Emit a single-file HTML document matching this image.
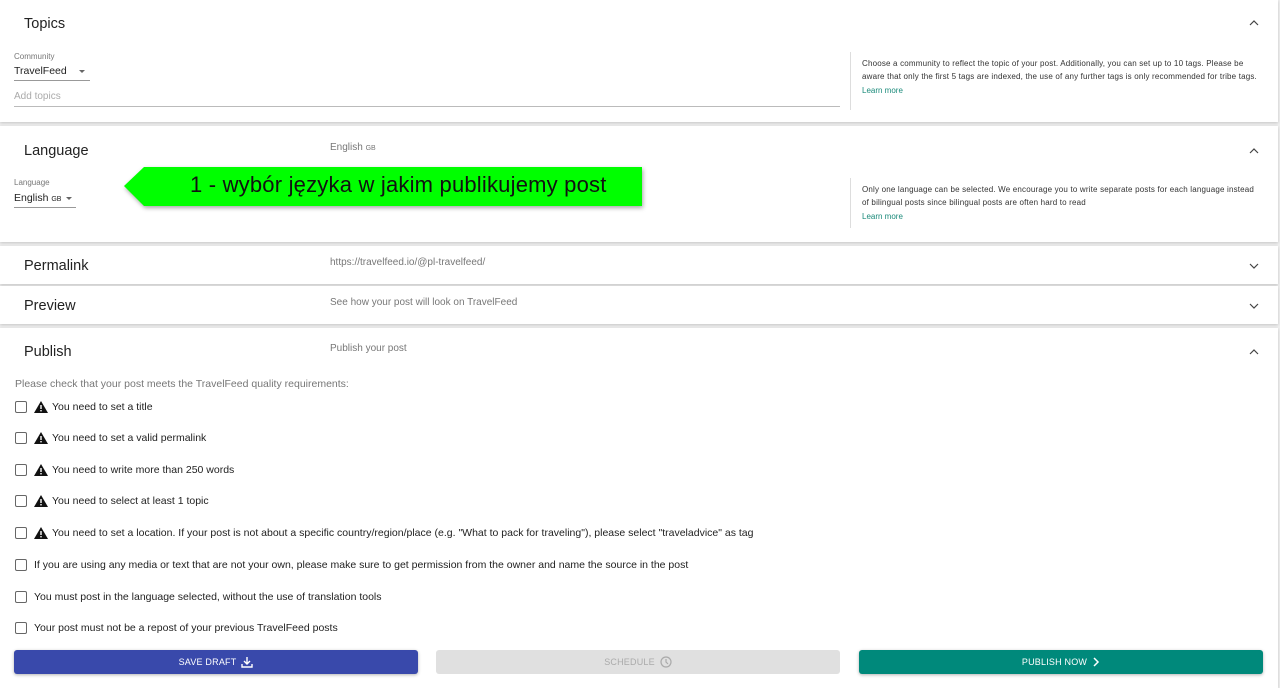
<!DOCTYPE html>
<html><head><meta charset="utf-8">
<style>
*{box-sizing:border-box;margin:0;padding:0}
body{width:1280px;height:679px;overflow:hidden;background:#efefef;font-family:"Liberation Sans",Arial,sans-serif;color:#222;position:relative}
.card{position:absolute;left:0;width:1278px;background:#fff;box-shadow:0 1px 3px rgba(0,0,0,.18)}
.h{position:absolute;left:24px;font-size:14.5px;color:#222}
.sub{position:absolute;left:330px;font-size:10px;color:#777}
.chev{position:absolute;left:1248px;width:12px;height:8px}
.lbl{position:absolute;left:14px;font-size:8px;color:#777}
.help{position:absolute;left:850px;border-left:1px solid #ddd;padding-left:11px;font-size:8px;line-height:13.3px;color:#333;width:410px;letter-spacing:.18px}
.help a{color:#1a8a7a;text-decoration:none;display:block;letter-spacing:0}
.row{position:absolute;left:15px;font-size:10.5px;color:#222;display:flex;align-items:center}
.cb{width:12px;height:12px;border:1.5px solid #666;border-radius:2px;margin-right:7px}
.warn{margin-right:4px}
.btn{position:absolute;top:650px;height:24px;border-radius:3px;font-size:9px;display:flex;align-items:center;justify-content:center;gap:5px;letter-spacing:.2px}
</style></head><body>
<div class="card" style="top:0;height:122px">
  <div class="h" style="top:16px">Topics</div>
  <svg class="chev" style="top:19px" viewBox="0 0 12 8"><path d="M2 6L6 2L10 6" stroke="#444" stroke-width="1.2" fill="none"/></svg>
  <div class="lbl" style="top:52px">Community</div>
  <div style="position:absolute;left:14px;top:65px;font-size:10.5px">TravelFeed</div>
  <div style="position:absolute;left:79px;top:70px;border:3px solid transparent;border-top:3.5px solid #666"></div>
  <div style="position:absolute;left:14px;top:80px;width:76px;height:1px;background:#999"></div>
  <div style="position:absolute;left:14px;top:91px;font-size:10px;color:#aaa">Add topics</div>
  <div style="position:absolute;left:14px;top:106px;width:826px;height:1px;background:#bbb"></div>
</div>
<div class="help" style="top:52px;height:58px;padding-top:5px">Choose a community to reflect the topic of your post. Additionally, you can set up to 10 tags. Please be aware that only the first 5 tags are indexed, the use of any further tags is only recommended for tribe tags.<a>Learn more</a></div>

<div class="card" style="top:126px;height:116px">
  <div class="h" style="top:17px">Language</div>
  <div class="sub" style="top:16px">English <span style="font-size:7px">GB</span></div>
  <svg class="chev" style="top:21px" viewBox="0 0 12 8"><path d="M2 6L6 2L10 6" stroke="#444" stroke-width="1.2" fill="none"/></svg>
  <div class="lbl" style="top:52px">Language</div>
  <div style="position:absolute;left:14px;top:66px;font-size:10.5px">English <span style="font-size:7px">GB</span></div>
  <div style="position:absolute;left:66px;top:71px;border:3px solid transparent;border-top:3.5px solid #666"></div>
  <div style="position:absolute;left:14px;top:81px;width:62px;height:1px;background:#999"></div>
  <div class="help" style="top:52px;height:50px;padding-top:5px">Only one language can be selected. We encourage you to write separate posts for each language instead of bilingual posts since bilingual posts are often hard to read<a>Learn more</a></div>
  <svg style="position:absolute;left:122px;top:40px;filter:drop-shadow(1px 2px 2px rgba(0,0,0,.35))" width="522" height="44" viewBox="0 0 522 44"><polygon points="2,20 22,1 520,1 520,40 22,40" fill="#00ff00"/></svg>
  <div style="position:absolute;left:190px;top:46px;font-size:22px;color:#111;letter-spacing:.2px">1 - wybór języka w jakim publikujemy post</div>
</div>

<div class="card" style="top:246px;height:38px">
  <div class="h" style="top:12px">Permalink</div>
  <div class="sub" style="top:11px">https://travelfeed.io/@pl-travelfeed/</div>
  <svg class="chev" style="top:16px" viewBox="0 0 12 8"><path d="M2 2L6 6L10 2" stroke="#444" stroke-width="1.2" fill="none"/></svg>
</div>
<div class="card" style="top:286px;height:38px">
  <div class="h" style="top:12px">Preview</div>
  <div class="sub" style="top:11px">See how your post will look on TravelFeed</div>
  <svg class="chev" style="top:16px" viewBox="0 0 12 8"><path d="M2 2L6 6L10 2" stroke="#444" stroke-width="1.2" fill="none"/></svg>
</div>
<div class="card" style="top:328px;height:360px">
  <div class="h" style="top:16px">Publish</div>
  <div class="sub" style="top:15px">Publish your post</div>
  <svg class="chev" style="top:20px" viewBox="0 0 12 8"><path d="M2 6L6 2L10 6" stroke="#444" stroke-width="1.2" fill="none"/></svg>
  <div style="position:absolute;left:15px;top:50px;font-size:10.5px;color:#777">Please check that your post meets the TravelFeed quality requirements:</div>
</div>
<div class="row" style="top:401px"><div class="cb"></div><svg class="warn" width="14" height="12" viewBox="0 0 14 12"><path d="M7 0L14 12H0Z" fill="#111"/><rect x="6.3" y="4" width="1.4" height="4" fill="#fff"/><rect x="6.3" y="9" width="1.4" height="1.4" fill="#fff"/></svg>You need to set a title</div>
<div class="row" style="top:432px"><div class="cb"></div><svg class="warn" width="14" height="12" viewBox="0 0 14 12"><path d="M7 0L14 12H0Z" fill="#111"/><rect x="6.3" y="4" width="1.4" height="4" fill="#fff"/><rect x="6.3" y="9" width="1.4" height="1.4" fill="#fff"/></svg>You need to set a valid permalink</div>
<div class="row" style="top:464px"><div class="cb"></div><svg class="warn" width="14" height="12" viewBox="0 0 14 12"><path d="M7 0L14 12H0Z" fill="#111"/><rect x="6.3" y="4" width="1.4" height="4" fill="#fff"/><rect x="6.3" y="9" width="1.4" height="1.4" fill="#fff"/></svg>You need to write more than 250 words</div>
<div class="row" style="top:495px"><div class="cb"></div><svg class="warn" width="14" height="12" viewBox="0 0 14 12"><path d="M7 0L14 12H0Z" fill="#111"/><rect x="6.3" y="4" width="1.4" height="4" fill="#fff"/><rect x="6.3" y="9" width="1.4" height="1.4" fill="#fff"/></svg>You need to select at least 1 topic</div>
<div class="row" style="top:527px"><div class="cb"></div><svg class="warn" width="14" height="12" viewBox="0 0 14 12"><path d="M7 0L14 12H0Z" fill="#111"/><rect x="6.3" y="4" width="1.4" height="4" fill="#fff"/><rect x="6.3" y="9" width="1.4" height="1.4" fill="#fff"/></svg>You need to set a location. If your post is not about a specific country/region/place (e.g. "What to pack for traveling"), please select "traveladvice" as tag</div>
<div class="row" style="top:559px"><div class="cb"></div>If you are using any media or text that are not your own, please make sure to get permission from the owner and name the source in the post</div>
<div class="row" style="top:591px"><div class="cb"></div>You must post in the language selected, without the use of translation tools</div>
<div class="row" style="top:622px"><div class="cb"></div>Your post must not be a repost of your previous TravelFeed posts</div>

<div class="btn" style="left:14px;width:404px;background:#3949ab;color:#fff;box-shadow:0 1px 3px rgba(0,0,0,.3)">SAVE DRAFT <svg width="12" height="12" viewBox="0 0 12 12"><path d="M6 1V8M3 5L6 8L9 5M1 8V11H11V8" stroke="#fff" stroke-width="1.4" fill="none"/></svg></div>
<div class="btn" style="left:436px;width:404px;background:#e0e0e0;color:#aaa">SCHEDULE <svg width="12" height="12" viewBox="0 0 12 12"><circle cx="6" cy="6" r="5" stroke="#aaa" stroke-width="1.2" fill="none"/><path d="M6 3V6L8 8" stroke="#aaa" stroke-width="1.2" fill="none"/></svg></div>
<div class="btn" style="left:859px;width:404px;background:#00897b;color:#fff;box-shadow:0 1px 3px rgba(0,0,0,.3)">PUBLISH NOW <svg width="8" height="10" viewBox="0 0 8 10"><path d="M2 1L6 5L2 9" stroke="#fff" stroke-width="1.5" fill="none"/></svg></div>
</body></html>
